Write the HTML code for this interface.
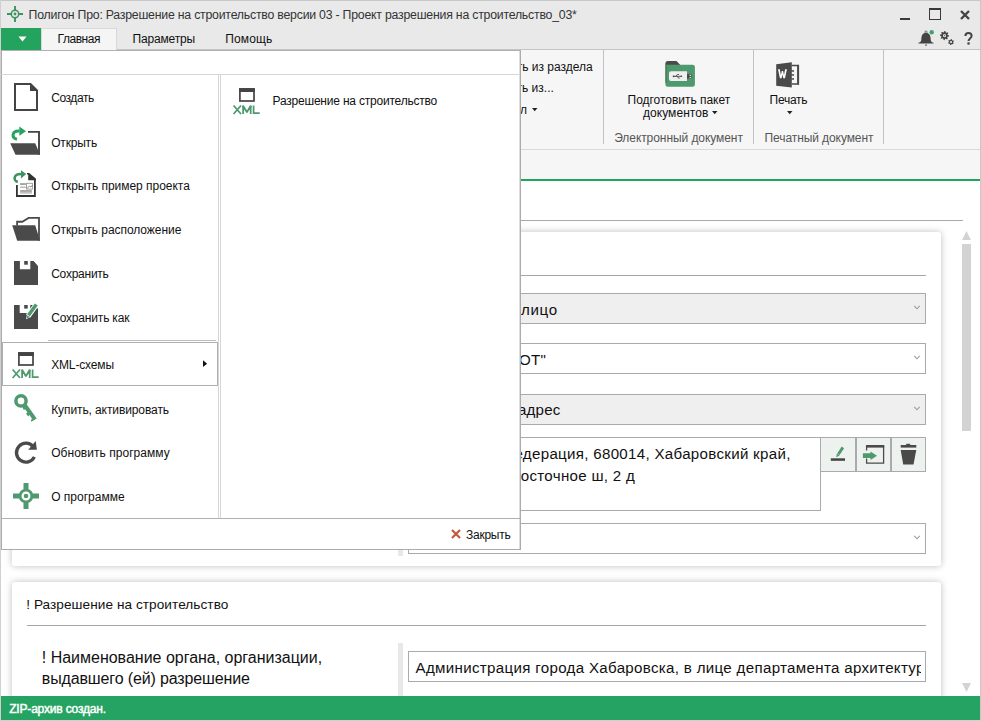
<!DOCTYPE html>
<html><head><meta charset="utf-8">
<style>
*{margin:0;padding:0;box-sizing:border-box}
html,body{width:981px;height:721px;overflow:hidden;background:#fff;font-family:"Liberation Sans",sans-serif;color:#222}
.a{position:absolute}
.t{position:absolute;white-space:nowrap;line-height:1}
svg{position:absolute;overflow:visible}
</style></head><body>
<!-- title bar -->
<div class="a" style="left:0;top:0;width:981px;height:50px;background:#e9e9e9"></div>
<svg style="left:7px;top:6px" width="16" height="16" viewBox="0 0 16 16"><g fill="none" stroke="#3d9160" stroke-width="1.9"><circle cx="8" cy="8" r="3.7" stroke-width="1.5"/><path d="M8 0v4.2M8 11.8V16M0 8h4.2M11.8 8H16"/></g><circle cx="8" cy="8" r="1.4" fill="#3d9160"/></svg>
<!-- window controls -->
<div class="a" style="left:900px;top:18px;width:10px;height:2px;background:#3a3a3a"></div>
<div class="a" style="left:929px;top:8px;width:12px;height:12px;border:1.3px solid #3a3a3a;border-top-width:2px"></div>
<svg style="left:960px;top:10px" width="10" height="10" viewBox="0 0 10 10"><path d="M1 1L9 9M9 1L1 9" stroke="#444" stroke-width="2.4"/></svg>
<!-- bell -->
<svg style="left:918px;top:29px" width="18" height="18" viewBox="0 0 18 18"><path d="M8 3.7C5 3.7 3.6 6 3.4 9L3.2 11.5C3 12.8 1.8 13.3 0.4 13.8V14.6H15.6V13.8C14.2 13.3 13 12.8 12.8 11.5L12.6 9C12.4 6 11 3.7 8 3.7z" fill="#444"/><path d="M7 3.6c0-1 .4-1.8 1-1.8s1 .8 1 1.8" fill="none" stroke="#555" stroke-width="0.9"/><rect x="7.1" y="15.6" width="1.9" height="1" fill="#444"/><circle cx="13.7" cy="3.3" r="2.2" fill="#3ea36a"/></svg>
<!-- gears -->
<svg style="left:940px;top:30px" width="16" height="16" viewBox="0 0 16 16"><path fill-rule="evenodd" d="M4.50 1.00 L5.40 1.09 L5.76 2.55 L6.33 2.86 L7.75 2.35 L8.32 3.04 L7.55 4.34 L7.74 4.96 L9.10 5.60 L9.01 6.50 L7.55 6.86 L7.24 7.43 L7.75 8.85 L7.06 9.42 L5.76 8.65 L5.14 8.84 L4.50 10.20 L3.60 10.11 L3.24 8.65 L2.67 8.34 L1.25 8.85 L0.68 8.16 L1.45 6.86 L1.26 6.24 L-0.10 5.60 L-0.01 4.70 L1.45 4.34 L1.76 3.77 L1.25 2.35 L1.94 1.78 L3.24 2.55 L3.86 2.36Z M6.10 5.60 A1.6 1.6 0 1 0 2.90 5.60 A1.6 1.6 0 1 0 6.10 5.60Z" fill="#444"/><circle cx="4.5" cy="5.6" r="0.6" fill="#444"/><path fill-rule="evenodd" d="M11.00 9.10 L11.78 9.20 L12.10 10.19 L12.56 10.54 L13.60 10.60 L13.90 11.32 L13.20 12.10 L13.13 12.67 L13.60 13.60 L13.12 14.22 L12.10 14.01 L11.57 14.23 L11.00 15.10 L10.22 15.00 L9.90 14.01 L9.44 13.66 L8.40 13.60 L8.10 12.88 L8.80 12.10 L8.87 11.53 L8.40 10.60 L8.88 9.98 L9.90 10.19 L10.43 9.97Z M12.10 12.10 A1.1 1.1 0 1 0 9.90 12.10 A1.1 1.1 0 1 0 12.10 12.10Z" fill="#444"/></svg>
<svg style="left:964px;top:32px" width="9" height="14" viewBox="0 0 9 14"><path d="M1.4 3.9C1.4 2.1 2.7 0.9 4.5 0.9S7.6 2 7.6 3.8c0 2.6-3.1 2.6-3.1 5.2" fill="none" stroke="#444" stroke-width="2"/><rect x="3.4" y="10.3" width="2.3" height="2.3" fill="#444"/></svg>
<!-- ribbon -->
<div class="a" style="left:0;top:50px;width:981px;height:130px;background:#f6f6f6"></div>
<div class="a" style="left:0;top:49px;width:981px;height:1px;background:#c4c4c4"></div>
<div class="a" style="left:0;top:149px;width:981px;height:1px;background:#dadada"></div>
<div class="a" style="left:0;top:179px;width:981px;height:2px;background:#24a35f"></div>
<div class="a" style="left:603px;top:50px;width:1px;height:94px;background:#c2c2c6"></div>
<div class="a" style="left:753px;top:50px;width:1px;height:94px;background:#c2c2c6"></div>
<div class="a" style="left:883px;top:50px;width:1px;height:94px;background:#c2c2c6"></div>
<!-- tabs -->
<div class="a" style="left:1px;top:28px;width:40px;height:22px;background:#24a35f"></div>
<svg style="left:18px;top:36px" width="9" height="6" viewBox="0 0 9 6"><path d="M0.5 0.5h8L4.5 5.5z" fill="#fff"/></svg>
<div class="a" style="left:41px;top:28px;width:76px;height:23px;background:#f5f5f5;border:1px solid #d9d9d9;border-bottom:none"></div>
<svg style="left:532px;top:108px" width="6" height="4" viewBox="0 0 6 4"><path d="M0 0h5.5L2.75 3.2z" fill="#222"/></svg>
<svg style="left:712px;top:111px" width="6" height="4" viewBox="0 0 6 4"><path d="M0 0h5.5L2.75 3.2z" fill="#222"/></svg>
<svg style="left:787px;top:111px" width="6" height="4" viewBox="0 0 6 4"><path d="M0 0h5.5L2.75 3.2z" fill="#222"/></svg>
<!-- folder usb icon -->
<svg style="left:665px;top:61px" width="30" height="26" viewBox="0 0 30 26"><path d="M0.4 2.5Q0.4 0 2.9 0H11.5l3.8 4H0.4z" fill="#4a4a4a"/><path d="M0.4 3.7H27.6Q29.9 3.7 29.9 6v17.4q0 2.3-2.3 2.3H2.7q-2.3 0-2.3-2.3z" fill="#4e9a6e"/><path d="M0.4 3.7h1.5v18H0.4z" fill="#4e7a5e"/><path d="M6 10.3H22V20H6Q4 20 4 18V12.3Q4 10.3 6 10.3z" fill="#efefef"/><rect x="22" y="13.2" width="4.5" height="4.4" fill="#4a4a4a"/><rect x="24.6" y="13.8" width="1.2" height="1.2" fill="#fff"/><rect x="24.6" y="16" width="1.2" height="1.2" fill="#fff"/><path d="M8.5 15.3h8.5M10.5 15.3l2-1.8h1.5M12 15.3l1.5 1.8h1.2" stroke="#444" stroke-width="0.9" fill="none"/><path d="M17.4 15.3l-1.5-1v2z" fill="#444"/><circle cx="8.6" cy="15.3" r="0.9" fill="#444"/></svg>
<!-- word icon -->
<svg style="left:776px;top:61px" width="24" height="28" viewBox="0 0 24 28"><path d="M15.8 4.6H22.1V22.9H15.8" fill="none" stroke="#4a4a4a" stroke-width="1.5"/><rect x="21.2" y="3.9" width="1.9" height="19.8" fill="#4a4a4a"/><path d="M0.2 3.2L15.8 1.2V26.6L0.2 24.8z" fill="#4a4a4a"/><rect x="15.5" y="9.2" width="2.5" height="1.5" fill="#4a4a4a"/><rect x="15.5" y="13.2" width="2.5" height="1.5" fill="#4a4a4a"/><rect x="15.5" y="17.2" width="2.5" height="1.5" fill="#4a4a4a"/><path d="M2 8.3H3.8L4.9 14.2L5.8 10H7.1L8 14.2L9.1 8.3H10.9L9 17.2H7.3L6.45 13.5L5.6 17.2H3.9z" fill="#fff"/></svg>

<!-- content -->
<div class="a" style="left:0;top:220px;width:963px;height:1px;background:#a9a9a9"></div>
<div class="a" style="left:12px;top:232px;width:929px;height:334px;background:#fff;border-radius:3px;box-shadow:0 0 7px rgba(0,0,0,.26)"></div>
<div class="a" style="left:27px;top:275px;width:899px;height:1px;background:#a5a5ad"></div>
<div class="a" style="left:408px;top:293px;width:518px;height:31px;background:#efefef;border:1px solid #a9a9b0"></div>
<div class="a" style="left:408px;top:343px;width:518px;height:31px;background:#fff;border:1px solid #a9a9b0"></div>
<div class="a" style="left:408px;top:394px;width:518px;height:31px;background:#efefef;border:1px solid #a9a9b0"></div>
<div class="a" style="left:408px;top:437px;width:413px;height:74px;background:#fff;border:1px solid #a9a9b0"></div>
<div class="a" style="left:820px;top:437px;width:36px;height:35px;background:#edf2ef;border:1px solid #a9a9b0"></div>
<div class="a" style="left:856px;top:437px;width:35px;height:35px;background:#edf2ef;border:1px solid #a9a9b0"></div>
<div class="a" style="left:891px;top:437px;width:35px;height:35px;background:#edf2ef;border:1px solid #a9a9b0"></div>
<div class="a" style="left:398px;top:515px;width:5px;height:41px;background:#e8e8e8"></div>
<div class="a" style="left:408px;top:523px;width:518px;height:31px;background:#fff;border:1px solid #a9a9b0"></div>
<svg style="left:913px;top:305px" width="7" height="5" viewBox="0 0 7 5"><path d="M1.2 0.9L3.95 3.8L6.7 0.9" fill="none" stroke="#9a9aa2" stroke-width="1.1"/></svg>
<svg style="left:913px;top:355px" width="7" height="5" viewBox="0 0 7 5"><path d="M1.2 0.9L3.95 3.8L6.7 0.9" fill="none" stroke="#9a9aa2" stroke-width="1.1"/></svg>
<svg style="left:913px;top:406px" width="7" height="5" viewBox="0 0 7 5"><path d="M1.2 0.9L3.95 3.8L6.7 0.9" fill="none" stroke="#9a9aa2" stroke-width="1.1"/></svg>
<svg style="left:913px;top:535px" width="7" height="5" viewBox="0 0 7 5"><path d="M1.2 0.9L3.95 3.8L6.7 0.9" fill="none" stroke="#9a9aa2" stroke-width="1.1"/></svg>
<!-- button icons -->
<svg style="left:830px;top:446px" width="16" height="16" viewBox="0 0 16 16"><rect x="0.8" y="12.3" width="14.2" height="2.5" fill="#444"/><path d="M12.9 1.4L8.4 8.3" stroke="#4e9a6e" stroke-width="2.9"/><path d="M6.9 7.6L9.7 9.4L6.2 11.2z" fill="#4e9a6e"/></svg>
<svg style="left:862px;top:445px" width="23" height="19" viewBox="0 0 23 19"><path d="M4.6 5.5V1.2h17v17h-17v-4.7" fill="none" stroke="#4a4a4a" stroke-width="1.3"/><rect x="4" y="0" width="18.2" height="2.6" fill="#4a4a4a"/><path d="M0.9 8.3h7.6V6.5l6.5 4.3-6.5 4.3V13H0.9z" fill="#4e9a6e"/></svg>
<svg style="left:900px;top:443px" width="17" height="22" viewBox="0 0 17 22"><rect x="0.7" y="2" width="15.6" height="2.6" fill="#4a4a4a"/><rect x="6.2" y="0.8" width="4" height="1.5" fill="#4a4a4a"/><path d="M0.7 7h15.6l-2.8 14.5H3.2z" fill="#4a4a4a"/></svg>

<div class="a" style="left:12px;top:582px;width:929px;height:200px;background:#fff;border-radius:3px;box-shadow:0 0 7px rgba(0,0,0,.26)"></div>
<div class="a" style="left:27px;top:625px;width:899px;height:1px;background:#a5a5ad"></div>
<div class="a" style="left:398px;top:643px;width:5px;height:60px;background:#e8e8e8"></div>
<div class="a" style="left:408px;top:651px;width:518px;height:31px;background:#fff;border:1px solid #a9a9b0;overflow:hidden"></div>
<div class="a" style="left:409px;top:652px;width:512px;height:29px;overflow:hidden"><div class="a" style="left:-409px;top:-652px;width:981px;height:721px">
<div class="t" style="left:415.60px;top:660.22px;font-size:15.1px;color:#111;letter-spacing:0.322px;">Администрация города Хабаровска, в лице департамента архитектуры</div>
</div></div>

<!-- status bar -->
<div class="a" style="left:0;top:696px;width:981px;height:24px;background:#24a362"></div>
<div class="t" style="left:28.60px;top:8.99px;font-size:12.3px;color:#333;letter-spacing:-0.222px;">Полигон Про: Разрешение на строительство версии 03 - Проект разрешения на строительство_03*</div>
<div class="t" style="left:57.60px;top:33.14px;font-size:12px;color:#111;letter-spacing:-0.463px;">Главная</div>
<div class="t" style="left:132.50px;top:33.14px;font-size:12px;color:#111;letter-spacing:-0.155px;">Параметры</div>
<div class="t" style="left:225.20px;top:33.14px;font-size:12px;color:#111;letter-spacing:0.141px;">Помощь</div>
<div class="t" style="left:516.65px;top:60.84px;font-size:12px;color:#111;">ть из раздела</div>
<div class="t" style="left:516.54px;top:82.44px;font-size:12px;color:#111;">ть из...</div>
<div class="t" style="left:520.00px;top:103.54px;font-size:12px;color:#111;">л</div>
<div class="t" style="left:627.60px;top:94.04px;font-size:12px;color:#111;letter-spacing:-0.030px;">Подготовить пакет</div>
<div class="t" style="left:642.90px;top:107.24px;font-size:12px;color:#111;letter-spacing:0.065px;">документов</div>
<div class="t" style="left:614.20px;top:132.04px;font-size:12px;color:#555;letter-spacing:-0.070px;">Электронный документ</div>
<div class="t" style="left:769.60px;top:93.84px;font-size:12px;color:#111;letter-spacing:-0.272px;">Печать</div>
<div class="t" style="left:764.50px;top:131.64px;font-size:12px;color:#555;letter-spacing:-0.083px;">Печатный документ</div>
<div class="t" style="left:507.25px;top:302.22px;font-size:15.1px;color:#111;letter-spacing:0.629px;">е лицо</div>
<div class="t" style="left:519.04px;top:352.22px;font-size:15.1px;color:#111;letter-spacing:0.2px;">ОТ"</div>
<div class="t" style="left:518.01px;top:402.42px;font-size:15.1px;color:#111;letter-spacing:0.2px;">адрес</div>
<div class="t" style="left:502.72px;top:446.12px;font-size:15.1px;color:#111;letter-spacing:0.306px;">Федерация, 680014, Хабаровский край,</div>
<div class="t" style="left:510.43px;top:467.92px;font-size:15.1px;color:#111;letter-spacing:0.299px;">Восточное ш, 2 д</div>
<div class="t" style="left:26.20px;top:598.09px;font-size:13.6px;color:#111;letter-spacing:0.068px;">! Разрешение на строительство</div>
<div class="t" style="left:41.80px;top:649.86px;font-size:16px;color:#111;letter-spacing:-0.011px;">! Наименование органа, организации,</div>
<div class="t" style="left:41.80px;top:671.06px;font-size:16px;color:#111;letter-spacing:-0.137px;">выдавшего (ей) разрешение</div>
<div class="t" style="left:9.20px;top:702.94px;font-size:12px;color:#fff;letter-spacing:-0.181px;-webkit-text-stroke:0.45px #fff;">ZIP-архив создан.</div>

<!-- scrollbar -->
<svg style="left:962px;top:231px" width="9" height="9" viewBox="0 0 9 9"><path d="M0 9h9L4.5 0z" fill="#d3d3d3"/></svg>
<div class="a" style="left:962px;top:244px;width:9px;height:187px;background:#d3d3d3"></div>
<svg style="left:962px;top:683px" width="9" height="9" viewBox="0 0 9 9"><path d="M0 0h9L4.5 9z" fill="#d3d3d3"/></svg>


<!-- window border -->
<div class="a" style="left:0;top:0;width:981px;height:1px;background:#c8c8c8"></div>
<div class="a" style="left:0;top:0;width:1px;height:721px;background:#d0d0d0"></div>
<div class="a" style="left:980px;top:0;width:1px;height:721px;background:#c8c8c8"></div>
<div class="a" style="left:0;top:720px;width:981px;height:1px;background:#d0d0d0"></div>

<!-- backstage menu -->
<div class="a" style="left:1px;top:50px;width:520px;height:500px;background:#fff;border:1px solid #ababab;border-top:1px solid #b0b0b0"></div>
<div class="a" style="left:1px;top:74px;width:519px;height:1px;background:#d6d6d6"></div>
<div class="a" style="left:519px;top:51px;width:1px;height:498px;background:#dcdcdc"></div>
<div class="a" style="left:218px;top:75px;width:1px;height:443px;background:#d6d6d6"></div>
<div class="a" style="left:220px;top:75px;width:1px;height:443px;background:#d6d6d6"></div>
<div class="a" style="left:1px;top:518px;width:520px;height:1px;background:#b0b0b0"></div>
<div class="a" style="left:48px;top:340px;width:168px;height:1px;background:#bdbdbd"></div>
<div class="a" style="left:2px;top:342px;width:216px;height:44px;border:1px solid #aeaeb4"></div>
<svg style="left:203px;top:360px" width="5" height="8" viewBox="0 0 5 8"><path d="M0 0.2v6.9L4.1 3.65z" fill="#111"/></svg>
<!-- menu icons -->
<!-- new doc -->
<svg style="left:14px;top:83px" width="24" height="28" viewBox="0 0 24 28"><path d="M1 1h15.5L23 7.5V27H1z" fill="none" stroke="#444" stroke-width="2"/><path d="M16 0v8h8z" fill="#444"/></svg>
<!-- open -->
<svg style="left:8px;top:122px" width="36" height="36" viewBox="0 0 36 36"><path d="M20 9.9h11v22.8" fill="none" stroke="#444" stroke-width="1.9"/><path d="M2.2 21.2h25l4.9 11.5H7.5z" fill="#4a4a4a"/><path d="M9 17.3C3.5 15.8 3.3 8.6 11.5 9" fill="none" stroke="#24a35f" stroke-width="3"/><path d="M11.3 4.6L18 9.2L11.3 13.7z" fill="#24a35f"/></svg>
<!-- open example -->
<svg style="left:10px;top:166px" width="30" height="34" viewBox="0 0 30 34"><path d="M6.9 18.9V30h18V13" fill="none" stroke="#333" stroke-width="1.8"/><path d="M17 7.1h2.2l6.6 5.4v1.8h-7.6V8.6H17z" fill="#333"/><rect x="10.1" y="17.2" width="5.7" height="1.7" fill="#999"/><rect x="10.1" y="20.6" width="5.7" height="1.2" fill="#aaa"/><rect x="16.5" y="17.3" width="5.9" height="5.8" fill="none" stroke="#999" stroke-width="0.9"/><path d="M17 22.5l2.5-2.5 1.3 1 1.8-2" stroke="#777" stroke-width="0.9" fill="none"/><rect x="10.1" y="24.3" width="11.8" height="1.4" fill="#888"/><rect x="10.1" y="26.1" width="11.8" height="1.5" fill="#bbb"/><path d="M7.8 16C3 14.5 3.2 7.7 11.5 8" fill="none" stroke="#3d9160" stroke-width="2.6"/><path d="M11 4.2L16.2 7.9L11 12.4z" fill="#3d9160"/></svg>
<!-- open location -->
<svg style="left:12px;top:216px" width="30" height="26" viewBox="0 0 30 26"><path d="M5.1 9.5V5.75H10.3L16.6 1.95H27V24.7" fill="none" stroke="#4a4a4a" stroke-width="1.8" stroke-linejoin="miter"/><path d="M0.2 9.2H23.2L28 24.7H5.2z" fill="#4a4a4a"/></svg>
<!-- save -->
<svg style="left:14px;top:261px" width="24" height="24" viewBox="0 0 24 24"><path d="M0 0h5.9v8.2h10.4V0h3.3L24 4.9V24H0z" fill="#4a4a4a"/><rect x="10.2" y="0" width="3.6" height="3.7" fill="#4a4a4a"/></svg>
<!-- save as -->
<svg style="left:14px;top:304px" width="26" height="26" viewBox="0 0 26 26"><path d="M0 1h5.7v8.1h10.6V1h4.2L24 5v20H0z" fill="#4a4a4a"/><rect x="10.2" y="1" width="3.5" height="3.6" fill="#4a4a4a"/><path d="M22.2 0.8L14.2 12" stroke="#fff" stroke-width="5.4"/><path d="M12 15.2l1-4.6 3.6 2.4z" fill="#fff"/><path d="M22.3 0.4L14.5 11.3" stroke="#4e9a6e" stroke-width="3.5"/><path d="M12.6 14.4l0.7-3.2 2.5 1.7z" fill="#4e9a6e"/></svg>
<!-- xml (menu) -->
<svg style="left:11px;top:352px" width="30" height="28" viewBox="0 0 30 28"><rect x="7.9" y="1" width="14.1" height="12" fill="none" stroke="#444" stroke-width="1.7"/><rect x="7.1" y="0.2" width="15.7" height="3.8" fill="#444"/><g fill="none" stroke="#4e9a6e" stroke-width="1.75"><path d="M1.6 17.5L9 26M9 17.5L1.6 26"/><path d="M11.1 26V18.3M18.7 26V18.3M11.1 17.8L14.9 24.2L18.7 17.8" stroke-linejoin="bevel"/><path d="M10.25 17.5h1.7l-1.7 2.6zM19.55 17.5h-1.7l1.7 2.6z" fill="#4e9a6e" stroke="none"/><path d="M21.6 17.5V25.1H27.7"/></g></svg>
<!-- key -->
<svg style="left:10px;top:390px" width="30" height="35" viewBox="0 0 30 35"><circle cx="11" cy="10.9" r="5.1" fill="none" stroke="#4e9a6e" stroke-width="3.5"/><path d="M16.6 14.3L26.7 28.4L21.4 31.8L20.8 29.8L22.2 28.9L19.4 24.9L18.2 26.6L16 23.4L17.4 22.4L15.4 19.6L13.5 19.8L12.4 16.5z" fill="#4e9a6e"/></svg>
<!-- refresh -->
<svg style="left:10px;top:436px" width="30" height="30" viewBox="0 0 30 30"><path d="M24.38 20.88A9.45 9.45 0 1 1 23.2 10.6" fill="none" stroke="#4a4a4a" stroke-width="3.3"/><path d="M25.7 5L26.9 13.7H18.2z" fill="#4a4a4a"/></svg>
<!-- about logo -->
<svg style="left:13px;top:483px" width="26" height="26" viewBox="0 0 26 26"><circle cx="13" cy="13" r="5.9" fill="none" stroke="#4e9a6e" stroke-width="2.9"/><circle cx="13" cy="13" r="2.3" fill="#4e9a6e"/><path d="M13 0v6M13 20v6M0 13h6M20 13h6" stroke="#4e9a6e" stroke-width="5"/></svg>
<!-- right panel xml -->
<svg style="left:232px;top:88px" width="30" height="28" viewBox="0 0 30 28"><rect x="7.9" y="1" width="14.1" height="12" fill="none" stroke="#444" stroke-width="1.7"/><rect x="7.1" y="0.2" width="15.7" height="3.8" fill="#444"/><g fill="none" stroke="#4e9a6e" stroke-width="1.75"><path d="M1.6 17.5L9 26M9 17.5L1.6 26"/><path d="M11.1 26V18.3M18.7 26V18.3M11.1 17.8L14.9 24.2L18.7 17.8" stroke-linejoin="bevel"/><path d="M10.25 17.5h1.7l-1.7 2.6zM19.55 17.5h-1.7l1.7 2.6z" fill="#4e9a6e" stroke="none"/><path d="M21.6 17.5V25.1H27.7"/></g></svg>
<!-- close x -->
<svg style="left:451px;top:529px" width="10" height="10" viewBox="0 0 10 10"><path d="M1 1L9 9M9 1L1 9" stroke="#c0593e" stroke-width="2.2"/></svg>
<div class="t" style="left:51.20px;top:91.94px;font-size:12px;color:#111;letter-spacing:-0.425px;">Создать</div>
<div class="t" style="left:51.20px;top:136.54px;font-size:12px;color:#111;letter-spacing:-0.196px;">Открыть</div>
<div class="t" style="left:51.20px;top:179.74px;font-size:12px;color:#111;letter-spacing:-0.025px;">Открыть пример проекта</div>
<div class="t" style="left:51.20px;top:224.44px;font-size:12px;color:#111;letter-spacing:-0.049px;">Открыть расположение</div>
<div class="t" style="left:51.20px;top:267.64px;font-size:12px;color:#111;letter-spacing:-0.247px;">Сохранить</div>
<div class="t" style="left:51.20px;top:311.74px;font-size:12px;color:#111;letter-spacing:-0.179px;">Сохранить как</div>
<div class="t" style="left:51.20px;top:359.34px;font-size:12px;color:#111;letter-spacing:-0.157px;">XML-схемы</div>
<div class="t" style="left:51.20px;top:403.54px;font-size:12px;color:#111;letter-spacing:-0.097px;">Купить, активировать</div>
<div class="t" style="left:51.20px;top:447.44px;font-size:12px;color:#111;letter-spacing:0.037px;">Обновить программу</div>
<div class="t" style="left:51.20px;top:490.74px;font-size:12px;color:#111;">О программе</div>
<div class="t" style="left:272.50px;top:94.94px;font-size:12px;color:#111;letter-spacing:-0.205px;">Разрешение на строительство</div>
<div class="t" style="left:466.00px;top:529.04px;font-size:12px;color:#111;letter-spacing:-0.261px;">Закрыть</div>
</body></html>
